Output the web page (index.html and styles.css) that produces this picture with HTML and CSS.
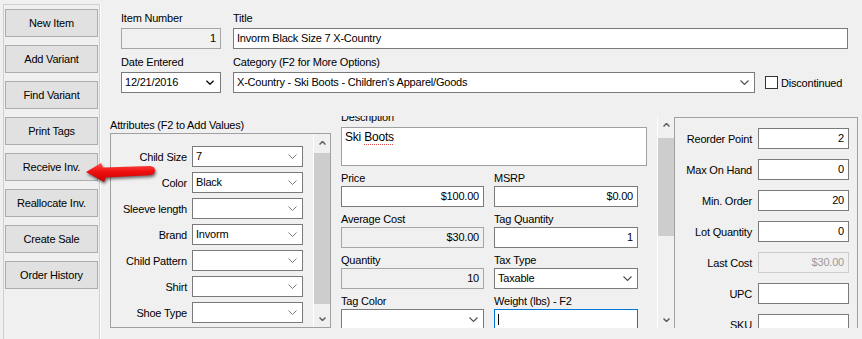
FILE: index.html
```html
<!DOCTYPE html>
<html lang="en">
<head>
  <meta charset="UTF-8" />
  <meta name="viewport" content="width=device-width, initial-scale=1.0" />
  <title>Item Maintenance</title>
  <link rel="stylesheet" href="styles.css">
</head>
<body>
  <div class="window">
    <aside class="sidebar">
      <button class="side-btn">New Item</button>
      <button class="side-btn">Add Variant</button>
      <button class="side-btn">Find Variant</button>
      <button class="side-btn">Print Tags</button>
      <button class="side-btn">Receive Inv.</button>
      <button class="side-btn">Reallocate Inv.</button>
      <button class="side-btn">Create Sale</button>
      <button class="side-btn">Order History</button>
    </aside>

    <main class="content">
      <div class="header">
        <div class="field">
          <span class="lbl">Item Number</span>
          <div class="box box-off num">1</div>
        </div>
        <div class="field">
          <span class="lbl">Title</span>
          <div class="box">Invorm Black Size 7 X-Country</div>
        </div>
        <div class="field">
          <span class="lbl">Date Entered</span>
          <div class="box select">
            <span>12/21/2016</span>
            <svg class="chev chev-dark" viewBox="0 0 9 5"><polyline points="0.5,0.5 4.5,4.5 8.5,0.5"/></svg>
          </div>
        </div>
        <div class="field">
          <span class="lbl">Category (F2 for More Options)</span>
          <div class="cat-row">
            <div class="box select cat">
              <span>X-Country - Ski Boots - Children's Apparel/Goods</span>
              <svg class="chev" viewBox="0 0 9 5"><polyline points="0.5,0.5 4.5,4.5 8.5,0.5"/></svg>
            </div>
            <label class="check"><span class="check-box"></span>Discontinued</label>
          </div>
        </div>
      </div>

      <div class="lower">
        <section class="attrs">
          <span class="lbl">Attributes (F2 to Add Values)</span>
          <div class="attr-box">
            <div class="attr-rows">
              <div class="attr-row"><span class="row-lbl">Child Size</span><div class="box select"><span>7</span><svg class="chev chev-light" viewBox="0 0 9 5"><polyline points="0.5,0.5 4.5,4.5 8.5,0.5"/></svg></div></div>
              <div class="attr-row"><span class="row-lbl">Color</span><div class="box select"><span>Black</span><svg class="chev chev-light" viewBox="0 0 9 5"><polyline points="0.5,0.5 4.5,4.5 8.5,0.5"/></svg></div></div>
              <div class="attr-row"><span class="row-lbl">Sleeve length</span><div class="box select"><span></span><svg class="chev chev-light" viewBox="0 0 9 5"><polyline points="0.5,0.5 4.5,4.5 8.5,0.5"/></svg></div></div>
              <div class="attr-row"><span class="row-lbl">Brand</span><div class="box select"><span>Invorm</span><svg class="chev chev-light" viewBox="0 0 9 5"><polyline points="0.5,0.5 4.5,4.5 8.5,0.5"/></svg></div></div>
              <div class="attr-row"><span class="row-lbl">Child Pattern</span><div class="box select"><span></span><svg class="chev chev-light" viewBox="0 0 9 5"><polyline points="0.5,0.5 4.5,4.5 8.5,0.5"/></svg></div></div>
              <div class="attr-row"><span class="row-lbl">Shirt</span><div class="box select"><span></span><svg class="chev chev-light" viewBox="0 0 9 5"><polyline points="0.5,0.5 4.5,4.5 8.5,0.5"/></svg></div></div>
              <div class="attr-row"><span class="row-lbl">Shoe Type</span><div class="box select"><span></span><svg class="chev chev-light" viewBox="0 0 9 5"><polyline points="0.5,0.5 4.5,4.5 8.5,0.5"/></svg></div></div>
            </div>
            <div class="scroll scroll-attrs">
              <div class="scroll-arrow"><svg viewBox="0 0 7 4"><polyline points="0.5,3.5 3.5,0.5 6.5,3.5"/></svg></div>
              <div class="thumb"></div>
              <div class="track"></div>
              <div class="scroll-arrow"><svg viewBox="0 0 7 4"><polyline points="0.5,0.5 3.5,3.5 6.5,0.5"/></svg></div>
            </div>
          </div>
        </section>

        <section class="details">
          <div class="details-body">
            <div class="details-inner">
              <span class="lbl lbl-desc">Description</span>
              <div class="desc">Ski <span class="spell">Boots</span></div>
              <div class="money-grid">
                <div><span class="lbl">Price</span><div class="box num">$100.00</div></div>
                <div><span class="lbl">MSRP</span><div class="box num">$0.00</div></div>
                <div><span class="lbl">Average Cost</span><div class="box box-off num">$30.00</div></div>
                <div><span class="lbl">Tag Quantity</span><div class="box num">1</div></div>
                <div><span class="lbl">Quantity</span><div class="box box-off num">10</div></div>
                <div><span class="lbl">Tax Type</span><div class="box select"><span>Taxable</span><svg class="chev" viewBox="0 0 9 5"><polyline points="0.5,0.5 4.5,4.5 8.5,0.5"/></svg></div></div>
                <div><span class="lbl">Tag Color</span><div class="box select"><span></span><svg class="chev" viewBox="0 0 9 5"><polyline points="0.5,0.5 4.5,4.5 8.5,0.5"/></svg></div></div>
                <div><span class="lbl">Weight (lbs) - F2</span><div class="box focus"><span class="caret"></span></div></div>
              </div>
            </div>
          </div>
          <div class="scroll scroll-details">
            <div class="scroll-arrow"><svg viewBox="0 0 7 4"><polyline points="0.5,3.5 3.5,0.5 6.5,3.5"/></svg></div>
            <div class="thumb"></div>
            <div class="track"></div>
            <div class="scroll-arrow"><svg viewBox="0 0 7 4"><polyline points="0.5,0.5 3.5,3.5 6.5,0.5"/></svg></div>
          </div>
        </section>

        <section class="stock">
          <div class="stock-row"><span class="row-lbl">Reorder Point</span><div class="box num">2</div></div>
          <div class="stock-row"><span class="row-lbl">Max On Hand</span><div class="box num">0</div></div>
          <div class="stock-row"><span class="row-lbl">Min. Order</span><div class="box num">20</div></div>
          <div class="stock-row"><span class="row-lbl">Lot Quantity</span><div class="box num">0</div></div>
          <div class="stock-row"><span class="row-lbl">Last Cost</span><div class="box box-dim num">$30.00</div></div>
          <div class="stock-row"><span class="row-lbl">UPC</span><div class="box"></div></div>
          <div class="stock-row"><span class="row-lbl">SKU</span><div class="box"></div></div>
        </section>
      </div>
    </main>
  </div>

  <!-- callout pointing at the Receive Inv. button -->
  <svg class="callout" viewBox="80 158 80 30" width="80" height="30">
    <defs>
      <linearGradient id="redFill" x1="0" y1="0" x2="0" y2="1">
        <stop offset="0" stop-color="#ff5050"/>
        <stop offset="0.45" stop-color="#f01010"/>
        <stop offset="1" stop-color="#c80000"/>
      </linearGradient>
    </defs>
    <path d="M86 172 L101 163 L103 167.5 L150 166 Q155 166.3 155 170.5 Q154.5 175 150 175.2 L106 177.6 L104 182 Z" fill="url(#redFill)"/>
  </svg>
</body>
</html>
```

FILE: styles.css
```css
body {
  margin: 0;
  background: #f0f0f0;
  font-family: "Liberation Sans", Arial, sans-serif;
  font-size: 11px;
  letter-spacing: -0.2px;
  color: #000;
}
.window {
  display: flex;
  height: 339px;
  overflow: hidden;
}
.sidebar {
  box-sizing: border-box;
  width: 97px;
  flex: none;
  margin: 4px 0 0 3px;
  padding: 4px 0 0 1px;
  border: 1px solid #cfcfcf;
  border-bottom: none;
  box-shadow: 1px 0 0 #fff;
  display: flex;
  flex-direction: column;
  gap: 8px;
}
.side-btn {
  width: 93px;
  height: 28px;
  padding: 0;
  background: #e1e1e1;
  border: 1px solid #adadad;
  font: inherit;
  letter-spacing: inherit;
  color: #000;
}
.content {
  flex: 1;
}
.header {
  display: grid;
  grid-template-columns: 100px 615px;
  column-gap: 12px;
  row-gap: 7px;
  padding: 12px 0 0 21px;
}
.lbl {
  display: block;
  height: 13px;
  line-height: 13px;
  margin-bottom: 3px;
  white-space: nowrap;
}
.box {
  box-sizing: border-box;
  height: 21px;
  border: 1px solid #7a7a7a;
  background: #fff;
  padding: 0 3px;
  line-height: 19px;
  white-space: nowrap;
  overflow: hidden;
}
.num {
  text-align: right;
  padding-right: 4px;
}
.box-off {
  background: #f0f0f0;
  border-color: #a6a6a6;
}
.box-dim {
  background: #f0f0f0;
  border-color: #cccccc;
  color: #9a9a9a;
}
.focus {
  border-color: #0078d7;
  display: flex;
  align-items: center;
}
.caret {
  width: 1px;
  height: 11px;
  background: #000;
}
.select {
  display: flex;
  align-items: center;
  justify-content: space-between;
  padding-right: 5px;
}
.chev {
  flex: none;
  width: 9px;
  height: 5px;
  fill: none;
  stroke: #505050;
  stroke-width: 1.1;
}
.chev-dark {
  stroke: #000;
  stroke-width: 1.4;
  width: 8px;
  margin-right: 1px;
}
.chev-light {
  stroke: #7a7a7a;
  stroke-width: 1;
}
.cat-row {
  display: flex;
  align-items: center;
}
.cat {
  width: 522px;
}
.check {
  display: flex;
  align-items: center;
  gap: 3px;
  margin-left: 10px;
}
.check-box {
  box-sizing: border-box;
  width: 13px;
  height: 13px;
  border: 1px solid #333;
  background: #fff;
}

.lower {
  display: flex;
  height: 212px;
  margin-top: 23px;
  overflow: hidden;
}
.attrs {
  width: 221px;
  flex: none;
  margin-left: 10px;
  padding-top: 3px;
}
.attrs .lbl {
  margin-bottom: 1px;
}
.attr-box {
  box-sizing: border-box;
  height: 195px;
  border: 1px solid #a0a0a0;
  display: flex;
}
.attr-rows {
  flex: 1;
  padding-top: 12px;
  display: flex;
  flex-direction: column;
  gap: 5px;
}
.attr-row {
  display: grid;
  grid-template-columns: 76px 111px;
  column-gap: 5px;
  align-items: center;
}
.row-lbl {
  text-align: right;
  white-space: nowrap;
}

.scroll {
  box-sizing: border-box;
  width: 17px;
  flex: none;
  border-left: 1px solid #fff;
  background: #f0f0f0;
  display: flex;
  flex-direction: column;
}
.scroll-arrow {
  height: 17px;
  flex: none;
  display: flex;
  align-items: center;
  justify-content: center;
}
.scroll-arrow svg {
  width: 7px;
  height: 4px;
  fill: none;
  stroke: #606060;
  stroke-width: 1.5;
}
.thumb {
  background: #cdcdcd;
  flex: none;
}
.track {
  flex: 1;
}
.scroll-attrs .thumb {
  margin-top: 2px;
  height: 151px;
}
.scroll-details .thumb {
  margin-top: 5px;
  height: 98px;
}

.details {
  width: 343px;
  flex: none;
  display: flex;
}
.details-body {
  flex: 1;
  overflow: hidden;
  padding-left: 10px;
}
.details-inner {
  margin-top: -5px;
}
.details .lbl {
  margin-bottom: 1px;
}
.details .lbl-desc {
  margin-bottom: 3px;
}
.desc {
  box-sizing: border-box;
  width: 306px;
  height: 39px;
  border: 1px solid #a0a0a0;
  background: #fff;
  padding: 2px 3px;
  font-size: 12px;
  line-height: 15px;
}
.spell {
  text-decoration: underline dotted #e05050;
  text-underline-offset: 3px;
}
.money-grid {
  display: grid;
  grid-template-columns: 143px 144px;
  column-gap: 10px;
  row-gap: 6px;
  margin-top: 6px;
}

.stock {
  box-sizing: border-box;
  width: 184px;
  flex: none;
  align-self: flex-start;
  margin-top: 1px;
  padding: 10px 8px 0 0;
  border: 1px solid #a0a0a0;
  border-bottom: none;
  display: flex;
  flex-direction: column;
  gap: 10px;
}
.stock-row {
  display: grid;
  grid-template-columns: 77px 91px;
  column-gap: 6px;
  align-items: center;
}

.callout {
  position: absolute;
  left: 80px;
  top: 158px;
  overflow: visible;
  filter: drop-shadow(1px 2px 1.5px rgba(0, 0, 0, 0.55));
}
```
